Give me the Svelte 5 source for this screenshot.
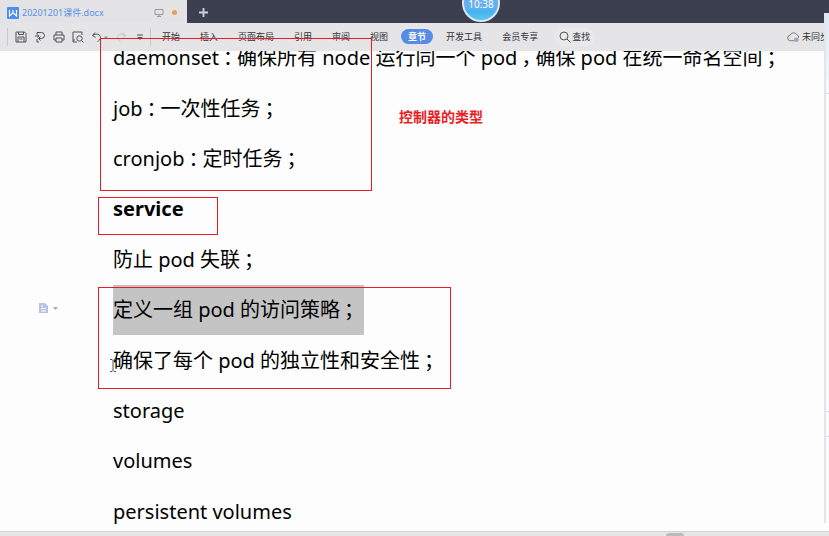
<script>
    const menus = ['开始', '插入', '页面布局', '引用', '审阅', '视图', '章节', '开发工具', '会员专享'];

    const lines = [
        'daemonset：确保所有 node 运行同一个 pod，确保 pod 在统一命名空间；',
        'job：一次性任务；',
        'cronjob：定时任务；',
        'service',
        '防止 pod 失联；',
        '定义一组 pod 的访问策略；',
        '确保了每个 pod 的独立性和安全性；',
        'storage',
        'volumes',
        'persistent volumes'
    ];

    let active = $state('章节');

    // full-width punctuation sits in the middle of its cell
    function pieces(text) {
        return text.split(/([：；，])/).filter(Boolean);
    }
</script>

<div class="window">
    <header class="tabs">
        <div class="tab">
            <svg class="logo" viewBox="0 0 12 12">
                <rect width="12" height="12" rx="1" fill="#4a8ff0" />
                <path d="M2.5 3v6l3.5-3.2L9.5 9V3M6 3v3" fill="none" stroke="#fff" stroke-width="1.2" />
            </svg>
            <span class="name">20201201课件.docx</span>
            <svg class="screen" viewBox="0 0 10 10">
                <path d="M1 1.5h8v5H1zM5 6.500v2M3 8.500h4" />
            </svg>
            <i class="dot"></i>
        </div>
        <button class="add" aria-label="新建标签">
            <svg viewBox="0 0 10 10"><path d="M5 0v10M0 5h10" /></svg>
        </button>
        <div class="clock">10:38</div>
    </header>

    <nav class="toolbar">
        <div class="tools">
            <button aria-label="保存">
                <svg viewBox="0 0 12 12"><path d="M1.500 1h8l1.500 1.500V11h-10V1zM3.500 1v2.500h5V1M3 11V6h6v5M4.500 8h3" /></svg>
            </button>
            <button aria-label="输出">
                <svg viewBox="0 0 12 12"><path d="M3 3.500V1.500h4.500a3 3 0 0 1 0 6H5M1 5h4M3.500 3.500L5 5 3.500 6.500M6.500 5.500L4.500 7.500l2 2M3 8v3h2" /></svg>
            </button>
            <button aria-label="打印">
                <svg viewBox="0 0 12 12"><path d="M3 4V1h6v3M3 9H1V4h10v5H9M3 7h6v4H3z" /></svg>
            </button>
            <button aria-label="打印预览">
                <svg viewBox="0 0 12 12"><path d="M5 11H1V1h9v3M10 10l1.500 1.500M1 9h2" /><circle cx="7.500" cy="7.500" r="2.700" /></svg>
            </button>
            <button aria-label="撤销">
                <svg viewBox="0 0 12 12"><path d="M4 1.500L1.500 4.500l3 2M1.500 4.500C5 2 9.500 3 9.500 6.500c0 2-1.500 3-3 4" /></svg>
                <svg class="caret" viewBox="0 0 5 12"><path d="M1 5.500h4L3 8z" /></svg>
            </button>
            <button class="faint" aria-label="恢复">
                <svg viewBox="0 0 12 12"><path d="M8 1.500l2.500 3-3 2M10.500 4.500C7 2 2.500 3 2.500 6.500c0 2 1.500 3 3 4" /></svg>
            </button>
            <button aria-label="更多">
                <svg viewBox="0 0 12 12"><path d="M3 4h6M4 6.500h4L6 8.500z" /></svg>
            </button>
        </div>
        <div class="menus">
            {#each menus as menu}
                <button class:active={active === menu} onclick={() => (active = menu)}>{menu}</button>
            {/each}
        </div>
        <button class="find">
            <svg viewBox="0 0 12 12"><circle cx="5" cy="5" r="4" /><path d="M8 8l3.500 3.500" /></svg>
            查找
        </button>
        <button class="sync">
            <svg viewBox="0 0 14 12">
                <path d="M8 10H4a3 3 0 0 1-.5-6A3.800 3.800 0 0 1 10.500 3.500 3 3 0 0 1 12.500 7" />
                <circle cx="10" cy="9" r="2.500" class="badge" />
            </svg>
            <span>未同步</span>
        </button>
    </nav>

    <main>
        <article>
            {#each lines as line, i}
                <p class:heading={i === 3}>
                    <span class:selected={i === 5}>{#each pieces(line) as piece}{#if /[：；，]/.test(piece)}<span class="mark">{piece}</span>{:else}{piece}{/if}{/each}</span>
                </p>
            {/each}
        </article>
        <button class="paragraph" aria-label="段落布局">
            <svg viewBox="0 0 20 12">
                <path d="M1 1h6l3 3v7H1z" fill="#b5c3e2" />
                <path d="M3 4h2M3 6.500h5M3 9h5" stroke="#fff" />
                <path d="M15 5h5l-2.500 3z" fill="#aaa" />
            </svg>
        </button>
        <svg class="cursor" viewBox="0 0 6 13"><path d="M0 .5h2l1 1 1-1h2M3 1.500v10M0 12.500h2l1-1 1 1h2" /></svg>
        <aside>
            <i></i>
            <i></i>
        </aside>
    </main>

    <footer><i></i></footer>

    <div class="frame types"></div>
    <div class="frame service"></div>
    <div class="frame policy"></div>
    <strong class="note">控制器的类型</strong>
</div>

<style>

:global(body){
    margin:0;
}

.window{
    position:relative;
    display:flex;
    flex-direction:column;
    height:100vh;
    overflow:hidden;
    background:#fdfdfe;
    color:#000;
    font-family:"Noto Sans", "Noto Sans CJK SC", sans-serif;
}

button{
    display:flex;
    align-items:center;
    padding:0;
    border:0;
    background:none;
    color:#333;
    font:inherit;
}

svg{
    display:block;
    fill:none;
    stroke-width:1;
}

.tabs{
    position:relative;
    display:flex;
    flex:none;
    height:23px;
    background:#3c3f4f;
}

.tab{
    display:flex;
    align-items:center;
    box-sizing:border-box;
    width:187px;
    padding:2px 10px 0 7px;
    background:#e3e3e5;
    color:#5a90e6;
    font-size:9px;
}

.logo{
    width:12px;
    height:12px;
    margin-right:3px;
}

.name{
    flex:1;
    white-space:nowrap;
}

.screen{
    width:10px;
    height:10px;
    margin-right:8px;
    stroke:#999;
}

.dot{
    width:5px;
    height:5px;
    border-radius:50%;
    background:#e9a04e;
}

.add{
    margin-left:12px;
    padding-top:1px;
}

.add svg{
    width:9px;
    height:9px;
    stroke:#d0d2da;
    stroke-width:2;
}

.clock{
    position:absolute;
    z-index:2;
    top:-16px;
    left:462px;
    box-sizing:border-box;
    width:38px;
    height:38px;
    padding-top:11px;
    border:2px solid #dce6ee;
    border-radius:50%;
    background:linear-gradient(#66aef0 60%, #45b4ee 75%, #58c6f4);
    color:#fff;
    font-size:10px;
    line-height:14px;
    text-align:center;
}

.toolbar{
    position:relative;
    z-index:1;
    display:flex;
    flex:none;
    align-items:center;
    box-sizing:border-box;
    height:28px;
    padding:0 0 1px 7px;
    background:#e5e5e7;
    font-family:"Noto Sans CJK SC", sans-serif;
    font-size:9px;
    white-space:nowrap;
}

.tools{
    display:flex;
    align-items:center;
    gap:7px;
    height:18px;
    padding:0 4px 0 7px;
    border:solid #c8c8ca;
    border-width:0 1px;
}

.tools svg{
    width:12px;
    height:12px;
    stroke:#505054;
}

.tools .caret{
    width:5px;
    fill:#909094;
    stroke:none;
}

.tools .faint svg{
    stroke:#c6c6c8;
}

.menus{
    display:flex;
    gap:6px;
    margin-left:4px;
}

.menus button{
    height:15px;
    padding:0 7px;
    border-radius:8px;
}

.menus .active{
    background:#568ce6;
    color:#fff;
    font-weight:700;
}

.find{
    height:18px;
    margin-left:9px;
    padding:0 5px;
    border-radius:9px;
    background:#e9e9eb;
}

.find svg{
    width:12px;
    height:12px;
    margin-right:1px;
    stroke:#555;
}

.sync{
    width:42px;
    margin-left:auto;
    overflow:hidden;
}

.sync svg{
    flex:none;
    width:13px;
    height:12px;
    margin-right:2px;
    stroke:#777;
}

.sync .badge{
    fill:#9aa7bd;
    stroke:none;
}

main{
    position:relative;
    display:flex;
    flex:1;
    min-height:0;
}

article{
    display:flex;
    flex:1;
    flex-direction:column;
    margin:-18px 0 -6px;
    padding-left:113px;
    font-size:20px;
    white-space:nowrap;
}

p{
    display:flex;
    flex:1;
    align-items:center;
    margin:0;
    line-height:50px;
}

.heading{
    font-weight:700;
}

.mark{
    padding:0 4px;
    font-feature-settings:"halt";
}

.selected{
    padding-right:6px;
    background:#c4c4c5;
}

.paragraph{
    position:absolute;
    top:251px;
    left:38px;
}

.paragraph svg{
    width:20px;
    height:12px;
}

.cursor{
    position:absolute;
    top:308px;
    left:110px;
    width:6px;
    height:13px;
    stroke:#555;
}

aside{
    position:absolute;
    z-index:2;
    top:-38px;
    right:0;
    bottom:8px;
    display:flex;
    flex-direction:column;
    justify-content:space-between;
    box-sizing:border-box;
    width:5px;
    padding-bottom:86px;
    border-left:2px solid #e2e6ec;
    background:#fbfcfe;
}

aside i{
    height:80px;
    border-bottom:1px solid #d5dbe5;
    background:linear-gradient(#dce8f4, #f8fafe);
}

aside i + i{
    height:24px;
    border-top:1px solid #d5dbe5;
    background:none;
}

footer{
    display:flex;
    flex:none;
    justify-content:flex-end;
    height:4px;
    padding-right:145px;
    border-top:1px solid #d2d2d4;
    background:#e6e6e7;
}

footer i{
    width:18px;
    margin-top:1px;
    border-radius:4px 4px 0 0;
    background:#bbb;
}

.frame{
    position:absolute;
    z-index:3;
    box-sizing:border-box;
    border:1px solid #ed1c24;
}

.types{
    top:38px;
    left:100px;
    width:272px;
    height:153px;
}

.service{
    top:197px;
    left:98px;
    width:120px;
    height:38px;
}

.policy{
    top:287px;
    left:98px;
    width:353px;
    height:102px;
}

.note{
    position:absolute;
    top:106px;
    left:399px;
    color:#ed1c24;
    font-family:"Noto Sans CJK SC", sans-serif;
    font-size:14px;
    line-height:20px;
}

</style>
